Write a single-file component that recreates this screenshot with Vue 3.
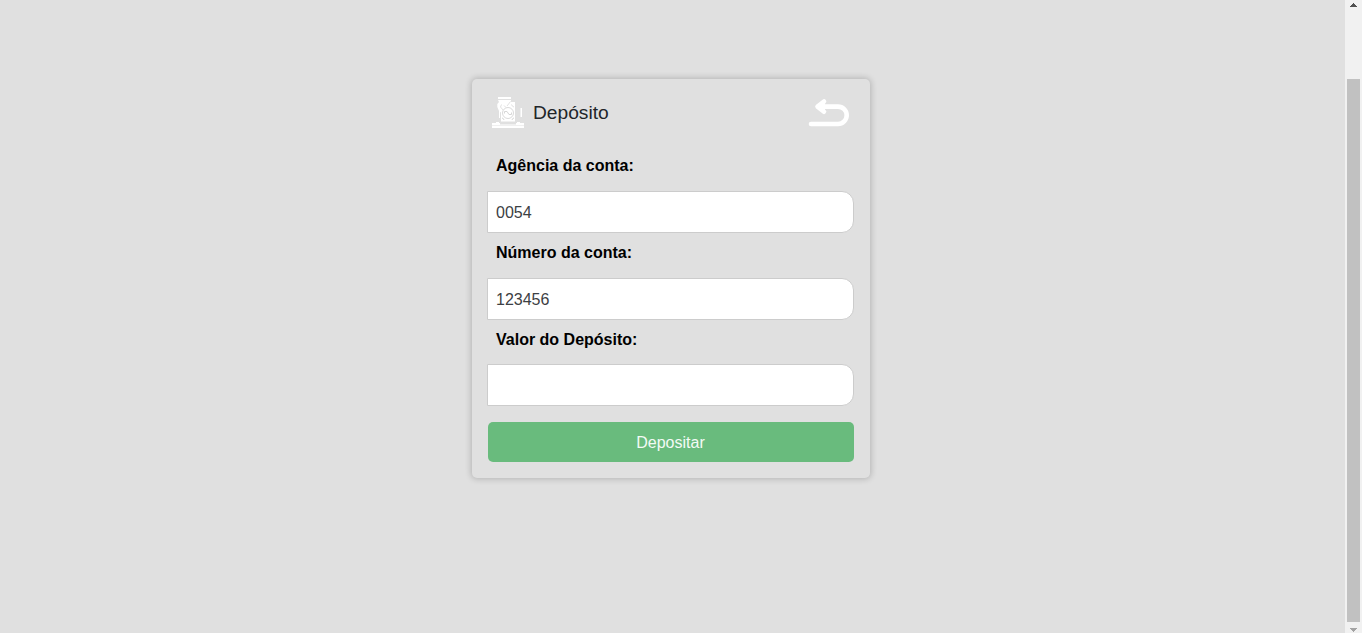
<script setup>
import { ref } from 'vue'

const fields = ref([
  { id: 'agencia', label: 'Agência da conta:', value: '0054' },
  { id: 'numero', label: 'Número da conta:', value: '123456' },
  { id: 'valor', label: 'Valor do Depósito:', value: '' },
])
</script>

<template>
  <div class="page">
    <main class="content">
      <form class="card" @submit.prevent>
        <header class="head">
          <svg class="deposit" viewBox="0 0 32 32" width="32" height="32">
            <path fill="#fff" d="M6 1h13v2H6zM6 4h13v2h4v19.500H9v-9l-2-1.500-1.700-4V8L7 6zM7 15h1v7H7zM28.500 12h1.500v9h-1.500zM0 27h8v1.500h16V27h8v2.500H0zM4 26h3v1H4zM25 26h3v1h-3zM0 30h32v2H0z" />
            <path fill="none" stroke="#dedede" stroke-width=".9" d="M9.500 8.500l-1 2.500 3 3.500M12 9.500l2 2M18.500 5.500l-3.500 4.500M19.500 8.500q.5 2 2.500 2.500" />
            <circle cx="16" cy="17" r="5.500" fill="#fff" stroke="#dadada" />
            <path fill="none" stroke="#d6d6d6" d="M12.500 17.500v-2h2.500l2 3h2.500v-2M10 22q1.500 0 2 2M22 22q-1.500 0-2 2" />
          </svg>
          <h1>Depósito</h1>
          <svg class="back" viewBox="0 0 42 30" width="42" height="30">
            <path d="M3 26H30a8.700 8.700 0 0 0 0-17.400H10M16 3.500L9.500 8.600L16 13.700" fill="none" stroke="#fff" stroke-width="4.600" stroke-linecap="round" stroke-linejoin="round" />
            <path d="M8.500 8.600L17 2v13.200z" fill="#fff" />
          </svg>
        </header>
        <div v-for="f in fields" :key="f.id" class="field">
          <label :for="f.id">{{ f.label }}</label>
          <input :id="f.id" v-model="f.value" type="text" />
        </div>
        <button type="submit">Depositar</button>
      </form>
    </main>
    <aside class="scrollbar">
      <svg width="17" height="10" viewBox="0 0 17 10"><path d="M5 7h7v-1h-1v-1h-1v-1h-1v-1h-1v1h-1v1h-1v1h-1z" fill="#505050" /></svg>
      <div class="thumb"></div>
      <svg width="17" height="11" viewBox="0 0 17 11"><path d="M5 6h7v1h-1v1h-1v1h-1v1h-1v-1h-1v-1h-1v-1h-1z" fill="#a3a3a3" /></svg>
    </aside>
  </div>
</template>

<style>
body {
  margin: 0;
  overflow: hidden;
}
</style>

<style scoped>
* {
  box-sizing: border-box;
}
.page {
  display: flex;
  height: 633px;
  background: #e0e0e0;
  font-family: "Liberation Sans", Arial, sans-serif;
}
.content {
  flex: 1;
  padding: 79px 3px 0 0;
}
.card {
  width: 398px;
  height: 399px;
  margin: 0 auto;
  padding: 12px 16px 16px;
  border-radius: 5px;
  background: #e0e0e0;
  box-shadow: 0 0 6px 1px rgba(0, 0, 0, 0.2);
}
.head {
  display: flex;
  align-items: center;
  height: 44px;
  padding: 0 4px;
}
.deposit {
  margin-top: -2px;
}
h1 {
  margin: 0 auto 0 9px;
  color: #212529;
  font-size: 19.2px;
  font-weight: 400;
}
.field {
  height: 86.55px;
  margin-left: -1px;
}
label {
  display: block;
  height: 56.3px;
  padding: 21.45px 9px 0;
  color: #000;
  font-size: 16px;
  font-weight: 700;
  line-height: 20px;
}
input {
  display: block;
  width: 367px;
  height: 42px;
  padding: 2px 8px 0;
  border: 1px solid #ccc;
  border-radius: 0 12px 12px 0;
  outline: 0;
  background: #fff;
  color: #3c4044;
  font: 300 16px "Liberation Sans", Arial, sans-serif;
}
button {
  display: block;
  width: 366px;
  height: 40px;
  margin-top: 27.35px;
  padding: 2px 1px 0 0;
  border: 0;
  border-radius: 5px;
  background: #69bb7d;
  color: #f3faf5;
  font: 300 16px "Liberation Sans", Arial, sans-serif;
}
.scrollbar {
  display: flex;
  flex-direction: column;
  width: 17px;
  background: #f1f1f1;
}
.scrollbar svg {
  display: block;
  shape-rendering: crispEdges;
}
.thumb {
  flex: 1;
  margin: 69px 2px 0;
  background: #c1c1c1;
}
</style>
